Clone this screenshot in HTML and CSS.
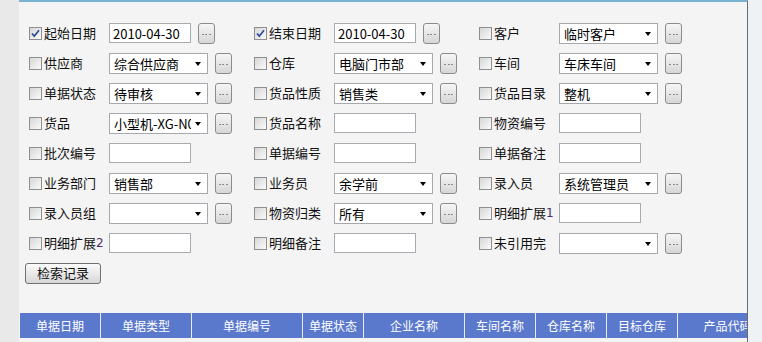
FILE: index.html
```html
<!DOCTYPE html>
<html lang="zh-CN">
<head>
   <meta charset="UTF-8"><title>单据查询</title>
   <link rel="stylesheet" href="styles.css">
</head> <body>

<div class="frame">
   <div class="side"></div>

   <section class="main">
      <div class="filters">
         <div class="row">
            <div class="cell">
               <label class="chk"><span class="box on"><svg viewBox="0 0 11 11"><path d="M2 5.5 L4.3 8.2 L9 2.2" /></svg></span>起始日期</label>
               <input class="txt" type="text" value="2010-04-30">
               <span class="more"></span>
            </div>
            <div class="cell">
               <label class="chk"><span class="box on"><svg viewBox="0 0 11 11"><path d="M2 5.5 L4.3 8.2 L9 2.2" /></svg></span>结束日期</label>
               <input class="txt" type="text" value="2010-04-30">
               <span class="more"></span>
            </div>
            <div class="cell">
               <label class="chk"><span class="box"></span>客户</label>
               <div class="sel"><span>临时客户</span><i></i></div>
               <span class="more"></span>
            </div>
         </div>

         <div class="row">
            <div class="cell">
               <label class="chk"><span class="box"></span>供应商</label>
               <div class="sel"><span>综合供应商</span><i></i></div>
               <span class="more"></span>
            </div>
            <div class="cell">
               <label class="chk"><span class="box"></span>仓库</label>
               <div class="sel"><span>电脑门市部</span><i></i></div>
               <span class="more"></span>
            </div>
            <div class="cell">
               <label class="chk"><span class="box"></span>车间</label>
               <div class="sel"><span>车床车间</span><i></i></div>
               <span class="more"></span>
            </div>
         </div>

         <div class="row">
            <div class="cell">
               <label class="chk"><span class="box"></span>单据状态</label>
               <div class="sel"><span>待审核</span><i></i></div>
               <span class="more"></span>
            </div>
            <div class="cell">
               <label class="chk"><span class="box"></span>货品性质</label>
               <div class="sel"><span>销售类</span><i></i></div>
               <span class="more"></span>
            </div>
            <div class="cell">
               <label class="chk"><span class="box"></span>货品目录</label>
               <div class="sel"><span>整机</span><i></i></div>
               <span class="more"></span>
            </div>
         </div>

         <div class="row">
            <div class="cell">
               <label class="chk"><span class="box"></span>货品</label>
               <div class="sel"><span>小型机-XG-N0</span><i></i></div>
               <span class="more"></span>
            </div>
            <div class="cell">
               <label class="chk"><span class="box"></span>货品名称</label>
               <input class="txt" type="text" value="">
            </div>
            <div class="cell">
               <label class="chk"><span class="box"></span>物资编号</label>
               <input class="txt" type="text" value="">
            </div>
         </div>

         <div class="row">
            <div class="cell">
               <label class="chk"><span class="box"></span>批次编号</label>
               <input class="txt" type="text" value="">
            </div>
            <div class="cell">
               <label class="chk"><span class="box"></span>单据编号</label>
               <input class="txt" type="text" value="">
            </div>
            <div class="cell">
               <label class="chk"><span class="box"></span>单据备注</label>
               <input class="txt" type="text" value="">
            </div>
         </div>

         <div class="row">
            <div class="cell">
               <label class="chk"><span class="box"></span>业务部门</label>
               <div class="sel"><span>销售部</span><i></i></div>
               <span class="more"></span>
            </div>
            <div class="cell">
               <label class="chk"><span class="box"></span>业务员</label>
               <div class="sel"><span>余学前</span><i></i></div>
               <span class="more"></span>
            </div>
            <div class="cell">
               <label class="chk"><span class="box"></span>录入员</label>
               <div class="sel"><span>系统管理员</span><i></i></div>
               <span class="more"></span>
            </div>
         </div>

         <div class="row">
            <div class="cell">
               <label class="chk"><span class="box"></span>录入员组</label>
               <div class="sel"><span></span><i></i></div>
               <span class="more"></span>
            </div>
            <div class="cell">
               <label class="chk"><span class="box"></span>物资归类</label>
               <div class="sel"><span>所有</span><i></i></div>
               <span class="more"></span>
            </div>
            <div class="cell">
               <label class="chk"><span class="box"></span>明细扩展<b class="num">1</b></label>
               <input class="txt" type="text" value="">
            </div>
         </div>

         <div class="row">
            <div class="cell">
               <label class="chk"><span class="box"></span>明细扩展<b class="num">2</b></label>
               <input class="txt" type="text" value="">
            </div>
            <div class="cell">
               <label class="chk"><span class="box"></span>明细备注</label>
               <input class="txt" type="text" value="">
            </div>
            <div class="cell">
               <label class="chk"><span class="box"></span>未引用完</label>
               <div class="sel"><span></span><i></i></div>
               <span class="more"></span>
            </div>
         </div>
      </div>

      <button class="search">检索记录</button>

      <div class="grid">
         <span class="c1">单据日期</span>
         <span class="c2">单据类型</span>
         <span class="c3">单据编号</span>
         <span class="c4">单据状态</span>
         <span class="c5">企业名称</span>
         <span class="c6">车间名称</span>
         <span class="c6">仓库名称</span>
         <span class="c6">目标仓库</span>
         <span class="c9">产品代码</span>
      </div>
   </section>

   <div class="rail"></div>
</div>

</body> </html>
```

FILE: styles.css
```css
body {
   margin: 0;
   font-family: "Noto Sans CJK SC", sans-serif;
   font-size: 13px;
   color: #111;
   background: #eef2f5;
}

.frame {
   display: flex;
   height: 342px;
   overflow: hidden;
}

.side {
   width: 19px;
   flex: none;
   background: #e9e9e9;
}

.main {
   width: 728px;
   flex: none;
   border-top: 2px solid #7ab1d2;
   border-right: 1px solid #6b6b6b;
   background: #f4f4f4;
   overflow: hidden;
}

.rail {
   flex: 1;
   background: #eef2f5;
}

/* filter rows */
.filters {
   padding: 16px 0 0 10px;
}

.row {
   display: flex;
   align-items: center;
   height: 30px;
}

.cell {
   width: 225px;
   flex: none;
   display: flex;
   align-items: center;
}

.chk {
   width: 80px;
   flex: none;
   display: flex;
   align-items: center;
   white-space: nowrap;
   line-height: 16px;
}

.num {
   font-weight: normal;
   font-family: "DejaVu Sans", sans-serif;
   font-size: 12px;
   color: #4b3068;
}

.box {
   width: 13px;
   height: 13px;
   box-sizing: border-box;
   margin-right: 2px;
   border: 1px solid #8e8f8f;
   background: linear-gradient(135deg, #d6d6d6, #fbfbfb);
   display: flex;
}

.box svg {
   width: 11px;
   height: 11px;
}

.box path {
   fill: none;
   stroke: #2f4f98;
   stroke-width: 1.8;
}

.txt {
   width: 82px;
   height: 20px;
   box-sizing: border-box;
   margin: 0;
   padding: 0 3px;
   border: 1px solid #a7abb0;
   background: #fff;
   font-family: inherit;
   font-size: 13px;
   color: #000;
   outline: none;
}

.sel {
   width: 99px;
   height: 21px;
   box-sizing: border-box;
   border: 1px solid #a5a9ae;
   background: #fff;
   display: flex;
   align-items: center;
   padding-left: 4px;
   color: #000;
}

.sel span {
   flex: 1;
   overflow: hidden;
   white-space: nowrap;
}

.sel i {
   width: 0;
   height: 0;
   margin: 1px 6px 0 4px;
   border-left: 3.5px solid transparent;
   border-right: 3.5px solid transparent;
   border-top: 4px solid #000;
}

.more {
   width: 17px;
   height: 21px;
   box-sizing: border-box;
   margin-left: 7px;
   border: 1px solid #8c8c8c;
   border-radius: 3px;
   background: linear-gradient(#f6f6f6, #d6d6d6);
   display: flex;
   justify-content: center;
   align-items: center;
}

.more::after {
   content: "";
   width: 9px;
   height: 1px;
   margin-top: 3px;
   background: repeating-linear-gradient(90deg, #8a8a8a 0 2px, transparent 2px 3.5px);
}

.search {
   display: block;
   margin: 5px 0 0 6px;
   width: 76px;
   height: 21px;
   padding: 0 0 2px;
   border: 1px solid #707070;
   border-radius: 3px;
   background: linear-gradient(#fbfbfb, #d7d7d7);
   font-family: inherit;
   font-size: 13px;
   line-height: 16px;
   color: #111;
}

/* result grid header */
.grid {
   display: flex;
   margin: 29px 0 0 1px;
   height: 25px;
   width: 800px;
   background: #5b79cc;
   color: #fff;
   font-size: 12px;
}

.grid span {
   flex: none;
   box-sizing: border-box;
   text-align: center;
   line-height: 25px;
   border-left: 1px solid #e8ecf8;
}

.grid .c1 { width: 80px; border-left: none; }
.grid .c2 { width: 91px; }
.grid .c3 { width: 111px; }
.grid .c4 { width: 61px; }
.grid .c5 { width: 101px; }
.grid .c6 { width: 71px; }
.grid .c9 { width: 100px; }
```
